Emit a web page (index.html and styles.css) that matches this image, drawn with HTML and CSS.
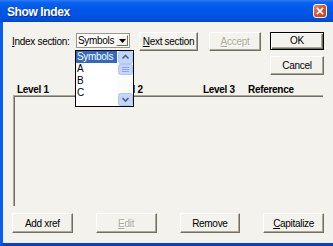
FILE: index.html
```html
<!DOCTYPE html>
<html>
<head>
<meta charset="utf-8">
<title>Show Index</title>
<link rel="stylesheet" href="styles.css">
</head>
<body>
<div class="window">
  <div class="titlebar">
    <span class="title">Show Index</span>
    <span class="close"><svg width="14" height="14" viewBox="0 0 14 14"><path d="M4 4 L10 10 M10 4 L4 10" stroke="#fff" stroke-width="2" stroke-linecap="square"/></svg></span>
  </div>
  <div class="client">
    <div class="row1">
      <span class="label"><u>I</u>ndex section:</span>
      <div class="combo">
        <span class="combo-text">Symbols</span>
        <span class="combo-btn"><svg width="7" height="4" viewBox="0 0 7 4"><path d="M0 0 H7 L3.5 4 Z" fill="#000"/></svg></span>
        <div class="droplist">
          <div class="items">
            <div class="item sel">Symbols</div>
            <div class="item">A</div>
            <div class="item">B</div>
            <div class="item">C</div>
          </div>
          <div class="scrollbar">
            <span class="sb-btn"><svg width="15" height="13" viewBox="0 0 15 13"><rect x="0.5" y="0.5" width="14" height="12" rx="2" fill="#C4D5FC" stroke="#B2C6F4"/><path d="M4.5 7.5 L7.5 4.5 L10.5 7.5" stroke="#4D6185" stroke-width="1.6" fill="none"/></svg></span>
            <span class="sb-thumb"><svg width="15" height="11" viewBox="0 0 15 11"><rect x="0.5" y="0.5" width="14" height="10" rx="2" fill="#C4D5FC" stroke="#B2C6F4"/><path d="M4 3.5 H11 M4 5.5 H11 M4 7.5 H11" stroke="#8CA6E6" stroke-width="1"/></svg></span>
            <span class="sb-track"></span>
            <span class="sb-btn"><svg width="15" height="13" viewBox="0 0 15 13"><rect x="0.5" y="0.5" width="14" height="12" rx="2" fill="#C4D5FC" stroke="#B2C6F4"/><path d="M4.5 5 L7.5 8 L10.5 5" stroke="#4D6185" stroke-width="1.6" fill="none"/></svg></span>
          </div>
        </div>
      </div>
      <button class="btn next"><u>N</u>ext section</button>
      <button class="btn accept" disabled><u>A</u>ccept</button>
      <button class="btn ok">OK</button>
    </div>
    <div class="row2">
      <button class="btn cancel">Cancel</button>
    </div>
    <div class="header">
      <span class="h1">Level 1</span>
      <span class="h2">Level 2</span>
      <span class="h3">Level 3</span>
      <span class="h4">Reference</span>
    </div>
    <div class="list"></div>
    <div class="bottom">
      <button class="btn bb">Add xref</button>
      <button class="btn bb" disabled><u>E</u>dit</button>
      <button class="btn bb">Remove</button>
      <button class="btn bb"><u>C</u>apitalize</button>
    </div>
  </div>
</div>
</body>
</html>
```

FILE: styles.css
```css
* { box-sizing: border-box; }
html, body { margin: 0; padding: 0; }
body {
  width: 333px;
  height: 246px;
  overflow: hidden;
  background: #F3F2EC;
  font-family: "Liberation Sans", Arial, sans-serif;
  font-size: 10px;
  letter-spacing: -0.3px;
  color: #000;
}
.window {
  width: 333px;
  height: 246px;
  display: flex;
  flex-direction: column;
}
.titlebar {
  height: 22px;
  flex: none;
  display: flex;
  align-items: center;
  justify-content: space-between;
  padding: 0 6px 0 7px;
  background: linear-gradient(#2E7CF6 0%, #0A62F0 12%, #0058E8 40%, #0052E0 80%, #0046D4 100%);
}
.title {
  color: #fff;
  font-weight: bold;
  font-size: 12px;
  letter-spacing: -0.4px;
  text-shadow: 1px 1px 0 #0B2F9A;
  margin-top: 1px;
}
.close {
  width: 14px;
  height: 14px;
  border: 1px solid #fff;
  border-radius: 3px;
  background: linear-gradient(135deg, #E98A6E 0%, #DA4E2E 50%, #C8401E 100%);
  display: flex;
  align-items: center;
  justify-content: center;
  margin-top: -1px;
}
.close svg { display: block; width: 12px; height: 12px; }
.client {
  flex: 1;
  border-left: 3px solid #0A5CF0;
  border-bottom: 3px solid #0840C8;
  padding: 10px 9px 0 9px;
  display: flex;
  flex-direction: column;
}
.row1 {
  display: flex;
  align-items: flex-start;
  height: 19px;
}
.label {
  width: 64px;
  line-height: 17px;
  padding-top: 1px;
}
.combo {
  position: relative;
  width: 54px;
  height: 15px;
  margin-top: 1px;
  background: #fff;
  border: 1px solid #9C9887;
  display: flex;
  align-items: center;
}
.combo-text { flex: 1; padding-left: 1px; line-height: 13px; }
.combo-btn {
  width: 12px;
  height: 11px;
  margin-right: 1px;
  background: #F3F2EC;
  border-top: 1px solid #fff;
  border-left: 1px solid #fff;
  border-right: 1px solid #716F64;
  border-bottom: 1px solid #716F64;
  display: flex;
  align-items: center;
  justify-content: center;
}
.combo-btn svg { display: block; }
.droplist {
  position: absolute;
  left: -2px;
  top: 16px;
  width: 59px;
  height: 57px;
  border: 1px solid #000;
  background: #fff;
  display: flex;
  z-index: 5;
  overflow: hidden;
}
.items { flex: 1; }
.item {
  height: 12px;
  line-height: 12px;
  padding-left: 1px;
}
.item.sel { background: #316AC5; color: #fff; }
.scrollbar {
  width: 16px;
  display: flex;
  flex-direction: column;
  align-items: center;
  background: #FBFBF8;
}
.sb-btn, .sb-thumb { display: block; line-height: 0; }
.sb-btn svg, .sb-thumb svg { display: block; }
.sb-track { flex: 1; }
.btn {
  font-family: "Liberation Sans", Arial, sans-serif;
  font-size: 10px;
  letter-spacing: -0.3px;
  color: #000;
  background: #F3F2EC;
  border-top: 1px solid #fff;
  border-left: 1px solid #fff;
  border-right: 1px solid #716F64;
  border-bottom: 1px solid #716F64;
  box-shadow: inset -1px -1px 0 #ACA899;
  padding: 0;
  margin: 0;
  height: 19px;
  line-height: 16px;
  border-radius: 0;
}
.btn[disabled] {
  color: #ACA899;
  text-shadow: 1px 1px 0 #fff;
}
.next { width: 59px; margin-left: 9px; }
.accept { width: 52px; margin-left: 11px; }
.ok {
  width: 54px;
  margin-left: 9px;
  height: 18px;
  border: 1px solid #000;
  box-shadow: inset 1px 1px 0 #fff, inset -1px -1px 0 #716F64, inset -2px -2px 0 #ACA899;
}
.row2 {
  display: flex;
  justify-content: flex-end;
  margin-top: 5px;
}
.cancel { width: 54px; }
.header {
  margin-top: 9px;
  height: 11px;
  line-height: 11px;
  font-weight: bold;
  display: grid;
  grid-template-columns: 94px 92px 45px 1fr;
  padding-left: 5px;
}
.list {
  margin-left: 1px;
  width: 310px;
  height: 111px;
  border-top: 1px solid #ACA899;
  border-left: 1px solid #ACA899;
  box-shadow: inset 1px 1px 0 #716F64;
}
.bottom {
  margin-top: 7px;
  display: flex;
  gap: 23px;
}
.bb { width: 61px; height: 20px; line-height: 17px; }
```
